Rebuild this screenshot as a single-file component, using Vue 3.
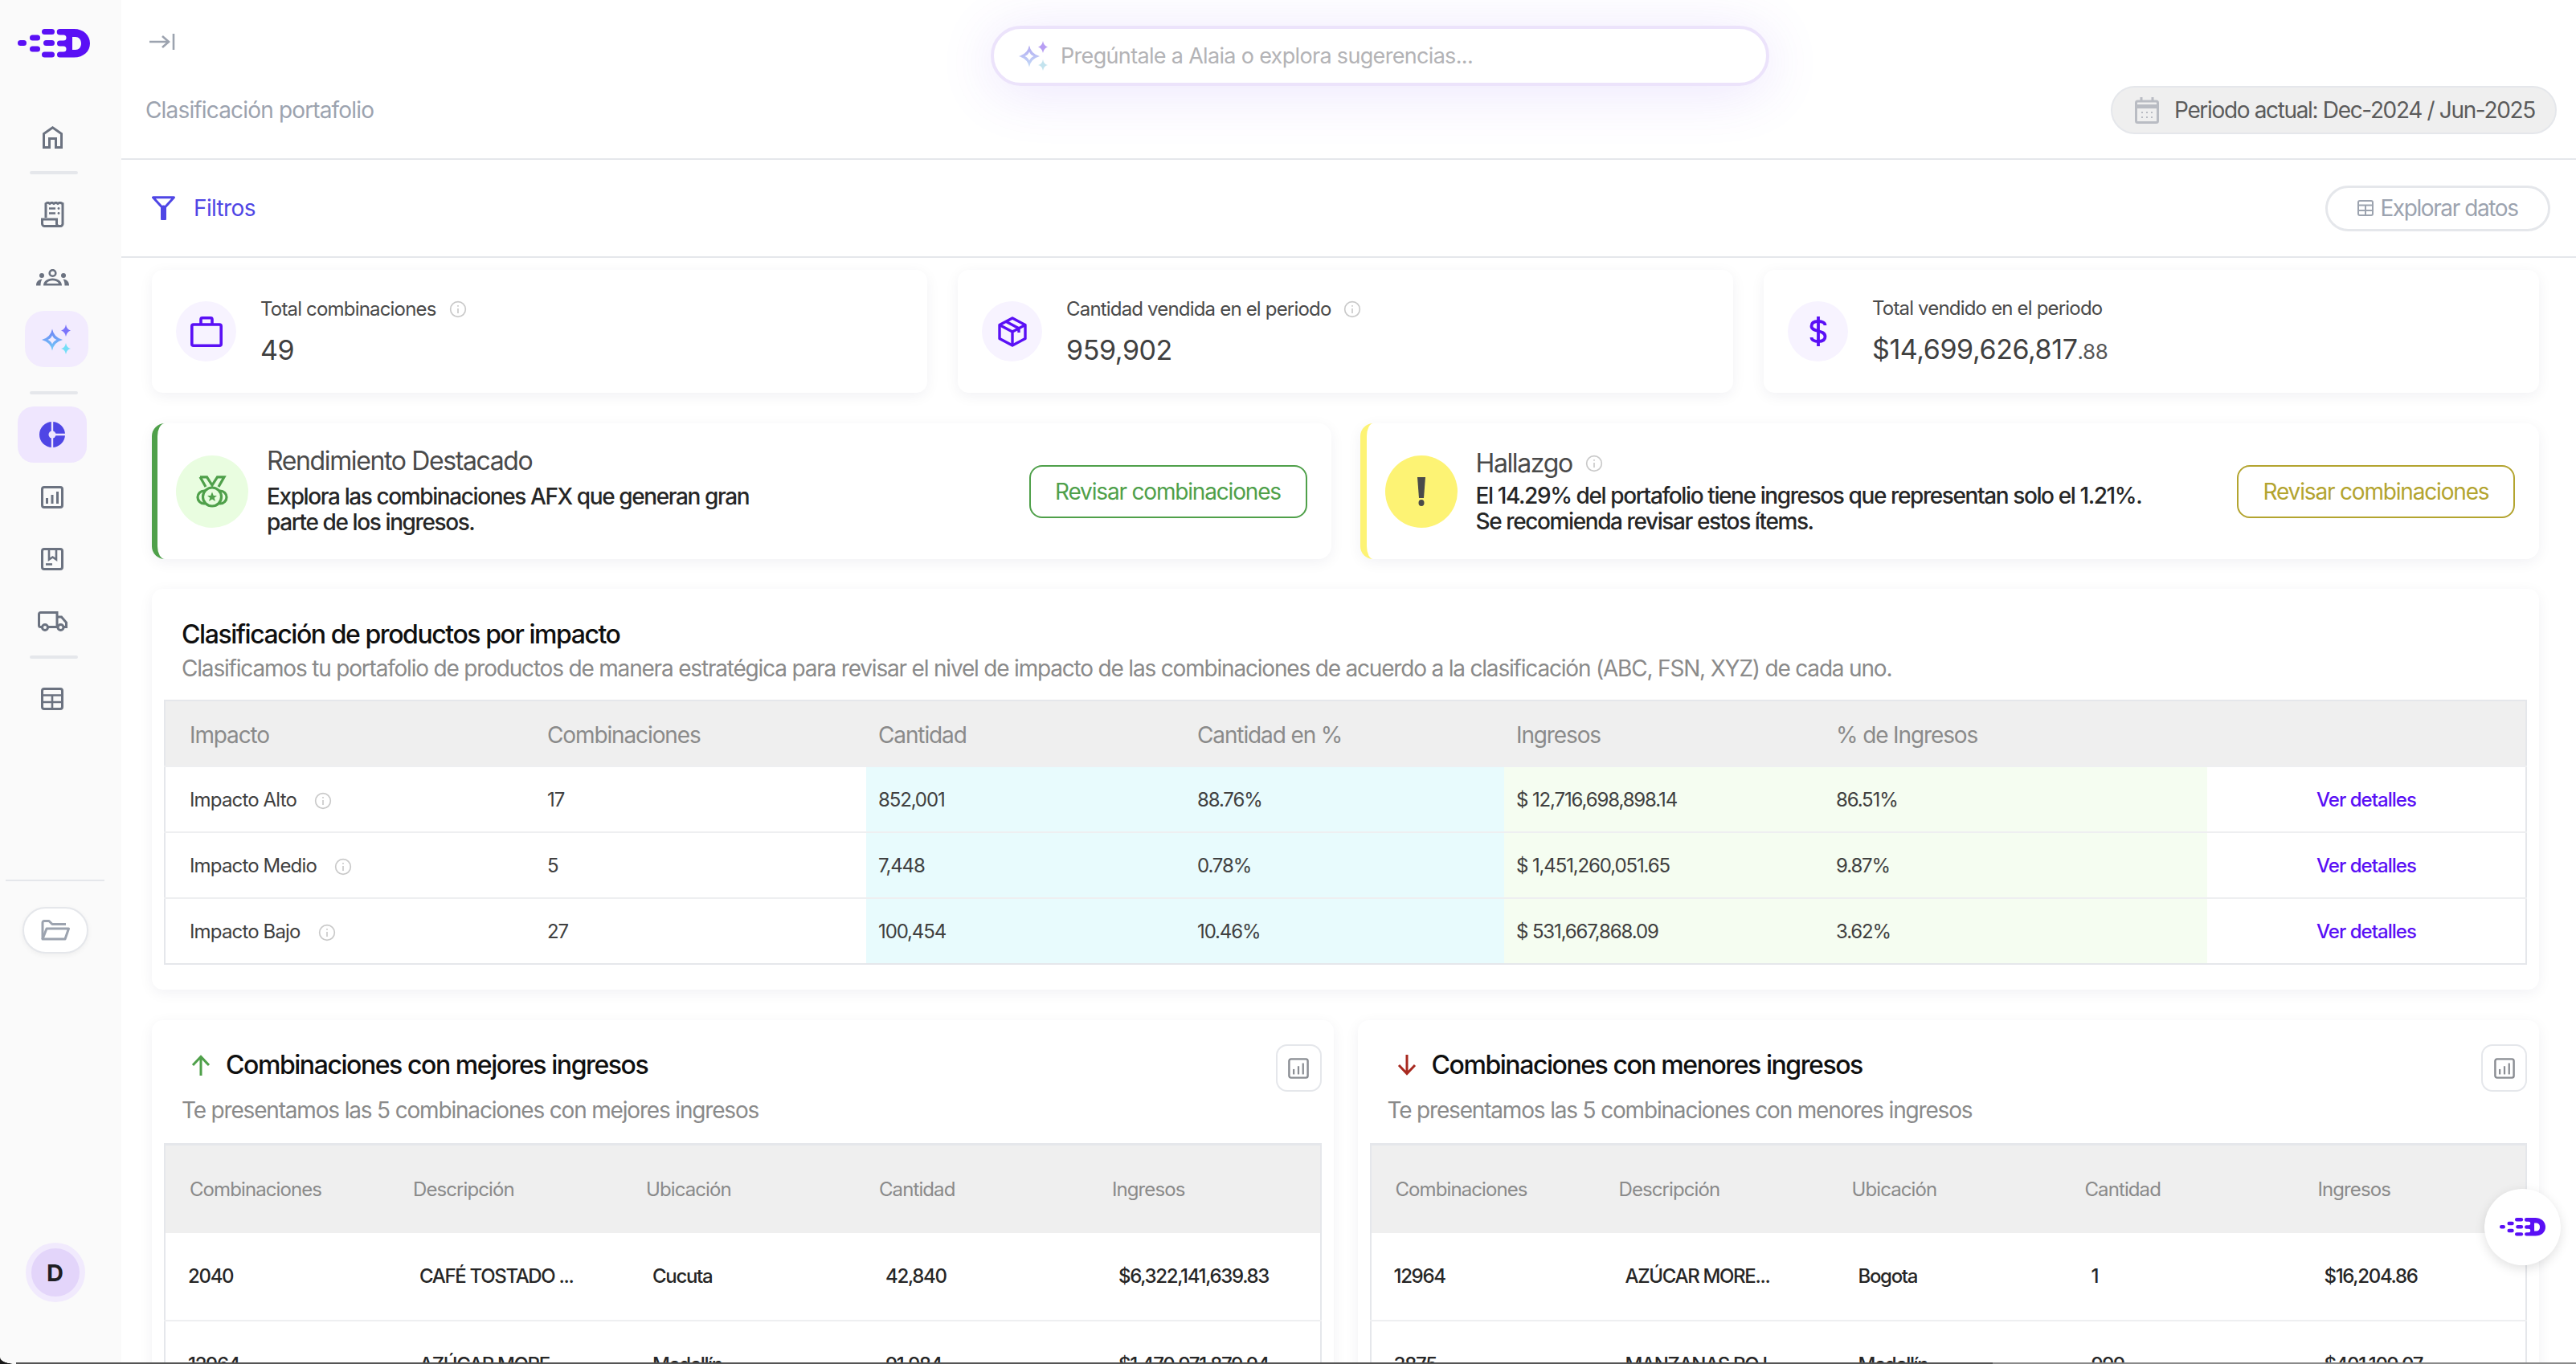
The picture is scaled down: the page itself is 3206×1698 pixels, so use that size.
<template>
  <div class="app">
    <!-- Sidebar -->
    <aside class="sidebar">
      <svg class="logo" viewBox="0 0 90 36">
        <g fill="#5a10f5">
          <rect x="0" y="14" width="11" height="7" rx="3.5" />
          <rect x="15" y="7.5" width="13" height="7" rx="3.5" />
          <rect x="15" y="21.5" width="13" height="7" rx="3.5" />
          <rect x="30" y="0" width="16" height="7" rx="3.5" />
          <rect x="32" y="14" width="14" height="7" rx="3.5" />
          <rect x="30" y="28.5" width="16" height="7" rx="3.5" />
          <path fill-rule="evenodd" d="M52.5 0H70C82 0 90 8 90 18S82 35.5 70 35.5H52.5A3.5 3.5 0 0 1 52.5 28.5H57A3.5 3.5 0 0 0 57 21.5H52.5A3.5 3.5 0 0 1 52.5 14.5H57A3.5 3.5 0 0 0 57 7.5H52.5A3.75 3.75 0 0 1 52.5 0ZM68 10V26H72C76 26 79 23 79 18S76 10 72 10Z" />
        </g>
      </svg>

      <div class="nav-item nav-home">
        <svg width="25" height="28" viewBox="0 0 25 28" fill="none" stroke="#6b7280" stroke-width="3">
          <path d="M1.5 26.5V9.5L12.5 1.8 23.5 9.5V26.5H16.5V15.5H8.5V26.5Z" />
        </svg>
      </div>
      <div class="nav-divider first"></div>
      <div class="nav-item nav-receipt">
        <svg width="29" height="32" viewBox="0 0 29 32" fill="none" stroke="#6b7280" stroke-width="3">
          <path d="M6 20V2.5L8.5 1 11 2.5 13.5 1 16 2.5 18.5 1 21 2.5 23.5 1 27 2.5V27A3 3 0 0 1 24 30.5H4.5A3 3 0 0 1 1.5 27.5V22H19.5V27.5A3 3 0 0 0 22 30.5" />
          <path d="M10 8.5H18M10 14.5H18" stroke-width="2.6" />
          <circle cx="22" cy="8.5" r="1.4" fill="#6b7280" stroke="none" />
          <circle cx="22" cy="14.5" r="1.4" fill="#6b7280" stroke="none" />
        </svg>
      </div>
      <div class="nav-item nav-group">
        <svg width="41" height="21" viewBox="0 0 41 21" fill="#6b7280">
          <circle cx="20.5" cy="5" r="3.8" fill="none" stroke="#6b7280" stroke-width="2.6" />
          <circle cx="7" cy="8" r="3" />
          <circle cx="34" cy="8" r="3" />
          <path d="M0 20.5C0 16 2.5 13 7.5 12.6 6 15 5.5 17.500 5.500 20.500Z" />
          <path d="M41 20.5C41 16 38.5 13 33.5 12.600 35 15 35.500 17.500 35.500 20.500Z" />
          <path fill-rule="evenodd" d="M9 20.500C9 15 14 11.500 20.500 11.500S32 15 32 20.500ZM13 18H28C27 15.500 24 14.300 20.500 14.300S14 15.500 13 18Z" />
        </svg>
      </div>
      <div class="nav-box nav-spark">
        <svg width="36" height="37" viewBox="0 0 36 37">
          <defs>
            <linearGradient id="sparkBig" x1="0" y1="0" x2="0" y2="1">
              <stop offset="0" stop-color="#6d7ff5" />
              <stop offset="1" stop-color="#72cdf8" />
            </linearGradient>
          </defs>
          <path fill="url(#sparkBig)" fill-rule="evenodd" d="M13 5.500Q15 16 26 19 15 22 13 32.500 11 22 0 19 11 16 13 5.500ZM13 13.500Q11.500 17.500 7.500 19 11.500 20.500 13 24.500 14.500 20.500 18.500 19 14.500 17.500 13 13.500Z" />
          <path fill="#7b74fb" d="M30 0Q31 6 36 7.500 31 9 30 15 29 9 24 7.500 29 6 30 0Z" />
          <path fill="#74def7" d="M30 23Q31 29 36 30 31 31 30 37 29 31 24 30 29 29 30 23Z" />
        </svg>
      </div>
      <div class="nav-divider second"></div>
      <div class="nav-box nav-active">
        <svg width="32" height="32" viewBox="0 0 32 32">
          <circle cx="16" cy="16" r="16" fill="#4f46e5" />
          <path d="M16 0V12M32 16H20M16 32V20" stroke="#efe6fe" stroke-width="2.4" />
          <circle cx="16" cy="16" r="4.500" fill="#efe6fe" />
        </svg>
      </div>
      <div class="nav-item nav-chart">
        <svg width="28" height="28" viewBox="0 0 28 28" fill="#6b7280">
          <rect x="1.500" y="1.500" width="25" height="25" rx="2.500" fill="none" stroke="#6b7280" stroke-width="3" />
          <rect x="6" y="15" width="3" height="7" />
          <rect x="12.500" y="11" width="3" height="11" />
          <rect x="19" y="7" width="3" height="15" />
        </svg>
      </div>
      <div class="nav-item nav-package">
        <svg width="28" height="28" viewBox="0 0 28 28" fill="none" stroke="#6b7280" stroke-width="3">
          <rect x="1.500" y="1.500" width="25" height="25" rx="2.500" />
          <path d="M10 2V14.500L14.500 11.500 19 14.500V2" stroke-width="2.600" />
          <path d="M6 20.500H14" stroke-width="2.600" />
        </svg>
      </div>
      <div class="nav-item nav-truck">
        <svg width="37" height="25" viewBox="0 0 37 25" fill="none" stroke="#6b7280" stroke-width="3">
          <path d="M5 19.500H3.500A2 2 0 0 1 1.500 17.500V3.500A2 2 0 0 1 3.500 1.500H24V19.500H13" />
          <path d="M24 7H29.500L35.500 14V19.500H33" />
          <circle cx="9" cy="20" r="3.500" />
          <circle cx="28.500" cy="20" r="3.500" />
        </svg>
      </div>
      <div class="nav-divider third"></div>
      <div class="nav-item nav-table">
        <svg width="28" height="28" viewBox="0 0 28 28" fill="none" stroke="#6b7280" stroke-width="3">
          <rect x="1.500" y="1.500" width="25" height="25" rx="2.500" />
          <path d="M2 9.500H26M2 18H26M14 9.500V26" stroke-width="2.600" />
        </svg>
      </div>

      <div class="sidebar-bottom">
        <div class="side-line"></div>
        <div class="folder-pill">
          <svg width="37" height="26" viewBox="0 0 37 26" fill="none" stroke="#9ca3af" stroke-width="3" stroke-linejoin="round">
            <path d="M3 24V3.500A2 2 0 0 1 5 1.500H11L15 5.500H32" />
            <path d="M3 24L8 11H35.500L31 24Z" />
          </svg>
        </div>
        <div class="avatar"><span>D</span></div>
      </div>
    </aside>

    <main class="main">
      <!-- Header -->
      <header class="top-header">
        <div class="header-left">
          <svg class="collapse-icon" width="32" height="20" viewBox="0 0 32 20" fill="none" stroke="#9ca3af" stroke-width="2.600">
            <path d="M0 10H24M16 3L24 10 16 17" />
            <path d="M30 0V20" />
          </svg>
          <span class="breadcrumb">Clasificación portafolio</span>
        </div>
        <div class="search">
          <svg class="search-spark" width="36" height="37" viewBox="0 0 36 37">
            <defs>
              <linearGradient id="sparkSoft" x1="0" y1="0" x2="0" y2="1">
                <stop offset="0" stop-color="#b3a8f2" />
                <stop offset="1" stop-color="#c4dcf7" />
              </linearGradient>
            </defs>
            <path fill="url(#sparkSoft)" fill-rule="evenodd" d="M13 5.500Q15 16 26 19 15 22 13 32.500 11 22 0 19 11 16 13 5.500ZM13 13.500Q11.500 17.500 7.500 19 11.500 20.500 13 24.500 14.500 20.500 18.500 19 14.500 17.500 13 13.500Z" />
            <path fill="#b79ef3" d="M30 0Q31 6 36 7.500 31 9 30 15 29 9 24 7.500 29 6 30 0Z" />
            <path fill="#c3e3ee" d="M30 23Q31 29 36 30 31 31 30 37 29 31 24 30 29 29 30 23Z" />
          </svg>
          <span class="search-text">Pregúntale a Alaia o explora sugerencias...</span>
        </div>
        <div class="period">
          <svg width="30" height="33" viewBox="0 0 30 33" fill="none" stroke="#b9bcc3" stroke-width="3">
            <rect x="1.500" y="5" width="27" height="26.500" rx="2" />
            <path d="M1.500 11.500H28.500" stroke-width="5" />
            <path d="M8 0V6M22 0V6" />
            <path d="M8 19H10M14 19H16M20 19H22M8 25H10M14 25H16M20 25H22" stroke-width="2.200" />
          </svg>
          <span>Periodo actual: Dec-2024 / Jun-2025</span>
        </div>
      </header>

      <!-- Filters -->
      <div class="filter-bar">
        <div class="filter-link">
          <svg width="29" height="30" viewBox="0 0 29 30" fill="none" stroke="#4f46e5" stroke-width="3" stroke-linejoin="round">
            <path d="M1.500 1.800H27.500L14.500 16Z" />
            <path d="M14.500 15V28" stroke-width="7" stroke-linecap="round" />
          </svg>
          <span>Filtros</span>
        </div>
        <button class="explore-btn">
          <svg width="20" height="20" viewBox="0 0 20 20" fill="none" stroke="#9ca3af" stroke-width="2">
            <rect x="1" y="1" width="18" height="18" rx="2" />
            <path d="M1 6.500H19M1 13H19M10 6.500V19" />
          </svg>
          Explorar datos
        </button>
      </div>

      <div class="content">
        <!-- Stat cards -->
        <section class="stat-grid">
          <div class="stat-card">
            <div class="stat-icon">
              <svg width="40" height="38" viewBox="0 0 40 38" fill="none" stroke="#5a10f5" stroke-width="3.600" stroke-linejoin="round">
                <rect x="1.800" y="10" width="36.400" height="26.200" rx="2" />
                <path d="M13 10V3.500A1.800 1.800 0 0 1 14.800 1.800H25.200A1.800 1.800 0 0 1 27 3.500V10" />
              </svg>
            </div>
            <div>
              <div class="stat-label">Total combinaciones <svg class="info" viewBox="0 0 20 20"><circle cx="10" cy="10" r="8.500" /><path d="M10 9V14.500M10 5.500V7" /></svg></div>
              <div class="stat-value">49</div>
            </div>
          </div>
          <div class="stat-card">
            <div class="stat-icon">
              <svg width="36" height="38" viewBox="0 0 36 38" fill="none" stroke="#5a10f5" stroke-width="3.400" stroke-linejoin="round">
                <path d="M18 2L34 10.500V27.500L18 36 2 27.500V10.500Z" />
                <path d="M2 10.500L18 19 34 10.500M18 19V36M10 6.200L26 14.800V20" />
              </svg>
            </div>
            <div>
              <div class="stat-label">Cantidad vendida en el periodo <svg class="info" viewBox="0 0 20 20"><circle cx="10" cy="10" r="8.500" /><path d="M10 9V14.500M10 5.500V7" /></svg></div>
              <div class="stat-value">959,902</div>
            </div>
          </div>
          <div class="stat-card">
            <div class="stat-icon">
              <svg width="22" height="37" viewBox="0 0 22 37" fill="none" stroke="#5a10f5" stroke-width="3.800">
                <path d="M19.500 11C19.500 8 16 6 11 6S2.500 8 2.500 12C2.500 20 19.500 16 19.500 25C19.500 29 16 31 11 31S2.500 29 2.500 26" />
                <path d="M11 0V37" />
              </svg>
            </div>
            <div>
              <div class="stat-label">Total vendido en el periodo</div>
              <div class="stat-value">$14,699,626,817<small>.88</small></div>
            </div>
          </div>
        </section>

        <!-- Alerts -->
        <section class="alert-grid">
          <div class="alert-card alert-good">
            <div class="alert-circle">
              <svg width="40" height="40" viewBox="0 0 40 40" fill="none" stroke="#4fa04a" stroke-width="3.200">
                <path d="M5 1.800H13.500L20 12 26.500 1.800H35L28 14M5 1.800L12 14" />
                <circle cx="10" cy="27" r="8" />
                <circle cx="30" cy="27" r="8" />
                <circle cx="20" cy="26.500" r="11.500" fill="#e9fde0" />
                <path d="M20 20.500L21.800 25H26L22.700 27.800 24 32 20 29.500 16 32 17.300 27.800 14 25H18.200Z" fill="#4fa04a" stroke="none" />
              </svg>
            </div>
            <div class="alert-text">
              <div class="alert-title">Rendimiento Destacado</div>
              <p class="alert-desc">Explora las combinaciones AFX que generan gran<br />parte de los ingresos.</p>
            </div>
            <button class="alert-btn">Revisar combinaciones</button>
          </div>
          <div class="alert-card alert-warn">
            <div class="alert-circle">
              <svg width="12" height="36" viewBox="0 0 12 36" fill="#4a4a4a">
                <path d="M1 0H11L9 26H3Z" />
                <ellipse cx="6" cy="32" rx="3.500" ry="4" />
              </svg>
            </div>
            <div class="alert-text">
              <div class="alert-title">Hallazgo <svg class="info" viewBox="0 0 20 20"><circle cx="10" cy="10" r="8.500" /><path d="M10 9V14.500M10 5.500V7" /></svg></div>
              <p class="alert-desc">El 14.29% del portafolio tiene ingresos que representan solo el 1.21%.<br />Se recomienda revisar estos ítems.</p>
            </div>
            <button class="alert-btn">Revisar combinaciones</button>
          </div>
        </section>

        <!-- Impact table -->
        <section class="panel impact-panel">
          <h2 class="panel-title">Clasificación de productos por impacto</h2>
          <p class="panel-sub">Clasificamos tu portafolio de productos de manera estratégica para revisar el nivel de impacto de las combinaciones de acuerdo a la clasificación (ABC, FSN, XYZ) de cada uno.</p>
          <table class="impact-table">
            <colgroup>
              <col style="width: 461px" />
              <col style="width: 412px" />
              <col style="width: 397px" />
              <col style="width: 397px" />
              <col style="width: 398px" />
              <col style="width: 477px" />
              <col />
            </colgroup>
            <thead>
              <tr>
                <th>Impacto</th>
                <th>Combinaciones</th>
                <th>Cantidad</th>
                <th>Cantidad en %</th>
                <th>Ingresos</th>
                <th>% de Ingresos</th>
                <th></th>
              </tr>
            </thead>
            <tbody>
              <tr v-for="row in impactRows" :key="row.name">
                <td>
                  <span class="impact-name">{{ row.name }}</span>
                  <svg class="info" viewBox="0 0 20 20"><circle cx="10" cy="10" r="8.500" /><path d="M10 9V14.500M10 5.500V7" /></svg>
                </td>
                <td>{{ row.count }}</td>
                <td class="cell-cyan">{{ row.qty }}</td>
                <td class="cell-cyan">{{ row.qtyPct }}</td>
                <td class="cell-green">{{ row.income }}</td>
                <td class="cell-green">{{ row.incomePct }}</td>
                <td class="cell-link">Ver detalles</td>
              </tr>
            </tbody>
          </table>
        </section>

        <!-- Best / worst combos -->
        <section class="combo-grid">
          <div v-for="panel in comboPanels" :key="panel.title" class="panel combo-panel">
            <div class="combo-head">
              <svg v-if="panel.up" class="combo-arrow" width="26" height="26" viewBox="0 0 26 26" fill="none" stroke="#4fa04a" stroke-width="3">
                <path d="M13 26V3M3 13L13 2.500 23 13" />
              </svg>
              <svg v-else class="combo-arrow" width="26" height="26" viewBox="0 0 26 26" fill="none" stroke="#a82a20" stroke-width="3">
                <path d="M13 0V23M3 13L13 23.500 23 13" />
              </svg>
              <h3 class="combo-title">{{ panel.title }}</h3>
              <div class="chart-btn">
                <svg width="26" height="26" viewBox="0 0 28 28" fill="#8a8d93">
                  <rect x="1.500" y="1.500" width="25" height="25" rx="2.500" fill="none" stroke="#8a8d93" stroke-width="2.600" />
                  <rect x="6.500" y="15" width="2.400" height="7" />
                  <rect x="12.800" y="11" width="2.400" height="11" />
                  <rect x="19" y="7" width="2.400" height="15" />
                </svg>
              </div>
            </div>
            <p class="combo-sub">{{ panel.sub }}</p>
            <table class="combo-table">
              <thead>
                <tr>
                  <th>Combinaciones</th>
                  <th>Descripción</th>
                  <th>Ubicación</th>
                  <th>Cantidad</th>
                  <th>Ingresos</th>
                </tr>
              </thead>
              <tbody>
                <tr v-for="row in panel.rows" :key="row[0]">
                  <td v-for="(cell, i) in row" :key="i">{{ cell }}</td>
                </tr>
              </tbody>
            </table>
          </div>
        </section>
      </div>
    </main>

    <!-- Floating assistant button -->
    <div class="fab">
      <svg width="57" height="23" viewBox="0 0 90 36">
        <g fill="#5a10f5">
          <rect x="0" y="14" width="11" height="7" rx="3.5" />
          <rect x="15" y="7.5" width="13" height="7" rx="3.5" />
          <rect x="15" y="21.5" width="13" height="7" rx="3.5" />
          <rect x="30" y="0" width="16" height="7" rx="3.5" />
          <rect x="32" y="14" width="14" height="7" rx="3.5" />
          <rect x="30" y="28.5" width="16" height="7" rx="3.5" />
          <path fill-rule="evenodd" d="M52.5 0H70C82 0 90 8 90 18S82 35.5 70 35.5H52.5A3.5 3.5 0 0 1 52.5 28.5H57A3.5 3.5 0 0 0 57 21.5H52.5A3.5 3.5 0 0 1 52.5 14.5H57A3.5 3.5 0 0 0 57 7.5H52.5A3.75 3.75 0 0 1 52.5 0ZM68 10V26H72C76 26 79 23 79 18S76 10 72 10Z" />
        </g>
      </svg>
    </div>

    <!-- window edge visible along the bottom of the capture -->
    <div class="window-edge"></div>
    <div class="window-corner"></div>
  </div>
</template>

<script setup>
const impactRows = [
  { name: 'Impacto Alto', count: 17, qty: '852,001', qtyPct: '88.76%', income: '$ 12,716,698,898.14', incomePct: '86.51%' },
  { name: 'Impacto Medio', count: 5, qty: '7,448', qtyPct: '0.78%', income: '$ 1,451,260,051.65', incomePct: '9.87%' },
  { name: 'Impacto Bajo', count: 27, qty: '100,454', qtyPct: '10.46%', income: '$ 531,667,868.09', incomePct: '3.62%' }
]

const comboPanels = [
  {
    title: 'Combinaciones con mejores ingresos',
    sub: 'Te presentamos las 5 combinaciones con mejores ingresos',
    up: true,
    rows: [
      ['2040', 'CAFÉ TOSTADO ...', 'Cucuta', '42,840', '$6,322,141,639.83'],
      ['12964', 'AZÚCAR MORE...', 'Medellín', '91,984', '$1,470,971,879.94']
    ]
  },
  {
    title: 'Combinaciones con menores ingresos',
    sub: 'Te presentamos las 5 combinaciones con menores ingresos',
    up: false,
    rows: [
      ['12964', 'AZÚCAR MORE...', 'Bogota', '1', '$16,204.86'],
      ['3875', 'MANZANAS RO I...', 'Medellín', '999', '$401,109.07']
    ]
  }
]
</script>

<style>
html,
body {
  margin: 0;
  height: 100%;
  overflow: hidden;
  background: #fff;
}
</style>

<style scoped>
.app {
  position: relative;
  display: flex;
  height: 100vh;
  overflow: hidden;
  font-family: Inter, 'Noto Sans', sans-serif;
  letter-spacing: -0.04em;
  color: #404040;
}

/* Sidebar */
.sidebar {
  flex: 0 0 151px;
  display: flex;
  flex-direction: column;
  align-items: center;
  box-sizing: border-box;
  padding: 36px 0 77px;
  background: #fafafa;
}
.logo {
  flex: none;
  width: 90px;
  height: 36px;
  margin-left: -17px;
}
.nav-item {
  display: flex;
  align-items: center;
  justify-content: center;
  height: 60px;
  width: 100%;
  padding-right: 21px;
  box-sizing: border-box;
}
.nav-home { margin-top: 69px; }
.nav-receipt { margin-top: 20px; }
.nav-group { margin-top: 18px; }
.nav-chart { margin-top: 13px; }
.nav-package { margin-top: 17px; }
.nav-truck { margin-top: 17px; }
.nav-table { margin-top: 20px; }
.nav-divider {
  width: 60px;
  height: 4px;
  border-radius: 2px;
  background: #e5e7eb;
  margin-left: -17px;
}
.nav-divider.first { margin-top: 12px; }
.nav-divider.second { margin-top: 30px; }
.nav-divider.third { margin-top: 13px; }
.nav-box {
  display: flex;
  align-items: center;
  justify-content: center;
  height: 70px;
}
.nav-spark {
  width: 79px;
  margin-top: 12px;
  margin-left: -11px;
  border-radius: 24px;
  background: #f2ebfe;
}
.nav-active {
  width: 86px;
  margin-top: 15px;
  margin-left: -21px;
  border-radius: 20px;
  background: #efe6fe;
}
.sidebar-bottom {
  margin-top: auto;
  display: flex;
  flex-direction: column;
  align-items: center;
  width: 100%;
}
.side-line {
  width: 123px;
  height: 2px;
  background: #e5e7eb;
  margin-left: -14px;
}
.folder-pill {
  display: flex;
  align-items: center;
  justify-content: center;
  box-sizing: border-box;
  width: 82px;
  height: 58px;
  margin: 32px 0 0 -14px;
  border: 2px solid #e5e7eb;
  border-radius: 29px;
  background: #fff;
  box-shadow: 0 2px 6px rgba(0, 0, 0, 0.05);
}
.avatar {
  display: flex;
  align-items: center;
  justify-content: center;
  width: 60px;
  height: 60px;
  margin: 360px 0 0 -14px;
  border: 7.5px solid #f1eafd;
  border-radius: 50%;
  background: #e3d5fa;
  font-size: 29px;
  font-weight: 700;
  letter-spacing: 0;
  color: #1f1f23;
}

/* Header */
.main {
  flex: 1;
  min-width: 0;
}
.top-header {
  display: grid;
  grid-template-columns: 1052px 969px 1fr;
  box-sizing: border-box;
  height: 199px;
  padding: 0 24px 0 30px;
  border-bottom: 2px solid #e5e7eb;
}
.header-left {
  display: flex;
  flex-direction: column;
  align-items: flex-start;
  padding: 42px 0 0 5px;
}
.collapse-icon {
  display: block;
}
.breadcrumb {
  margin: 55px 0 0 -5px;
  font-size: 28px;
  line-height: 40px;
  letter-spacing: -0.03em;
  color: #9ca3af;
}
.search {
  display: flex;
  align-items: center;
  gap: 16px;
  box-sizing: border-box;
  align-self: start;
  height: 75px;
  margin-top: 32px;
  padding-left: 31px;
  border: 4px solid #ece3fb;
  border-radius: 38px;
  background: #fff;
  box-shadow: 0 8px 70px rgba(120, 70, 240, 0.14);
}
.search-text {
  font-size: 27px;
  letter-spacing: -0.025em;
  color: #b3b3b6;
}
.period {
  display: flex;
  align-items: center;
  gap: 19px;
  box-sizing: border-box;
  justify-self: end;
  align-self: start;
  width: 555px;
  height: 60px;
  margin-top: 107px;
  padding-left: 28px;
  border: 2px solid #e5e7eb;
  border-radius: 30px;
  background: #efefef;
  font-size: 28px;
  letter-spacing: -0.048em;
  color: #5b5b5b;
  white-space: nowrap;
}
.period svg {
  flex: none;
}

/* Filter bar */
.filter-bar {
  display: flex;
  align-items: center;
  justify-content: space-between;
  box-sizing: border-box;
  height: 122px;
  padding: 0 32px 0 38px;
  border-bottom: 2px solid #e5e7eb;
}
.filter-link {
  display: flex;
  align-items: center;
  gap: 23px;
  font-size: 28px;
  color: #4f46e5;
}
.explore-btn {
  display: flex;
  align-items: center;
  justify-content: center;
  gap: 8px;
  width: 280px;
  height: 57px;
  border: 3px solid #e5e7eb;
  border-radius: 29px;
  background: #fff;
  font-family: inherit;
  letter-spacing: -0.05em;
  font-size: 28px;
  color: #9ca3af;
}

/* Content */
.content {
  padding: 15px 46px 0 38px;
}
.stat-grid {
  display: grid;
  grid-template-columns: repeat(3, 1fr);
  gap: 38px;
}
.stat-card {
  display: flex;
  align-items: center;
  gap: 30px;
  height: 153px;
  padding-left: 30px;
  border-radius: 14px;
  background: #fff;
  box-shadow: 0 4px 18px rgba(20, 20, 60, 0.06);
}
.stat-icon {
  display: flex;
  align-items: center;
  justify-content: center;
  width: 75px;
  height: 75px;
  border-radius: 50%;
  background: #f7f3ff;
}
.stat-label {
  display: flex;
  align-items: center;
  gap: 16px;
  font-size: 24px;
  line-height: 32px;
  letter-spacing: -0.034em;
  color: #4a4a4a;
}
.stat-value {
  margin-top: 15px;
  font-size: 34px;
  line-height: 40px;
  letter-spacing: -0.012em;
  color: #404040;
}
.stat-value small {
  font-size: 26px;
  color: #555;
}
.info {
  flex: none;
  width: 22px;
  height: 22px;
  fill: none;
  stroke: #c9c9c9;
  stroke-width: 1.500;
}

/* Alerts */
.alert-grid {
  display: grid;
  grid-template-columns: 1fr 1fr;
  gap: 36px;
  margin-top: 38px;
}
.alert-card {
  display: flex;
  align-items: center;
  gap: 23px;
  box-sizing: border-box;
  height: 169px;
  padding: 0 30px 0 23px;
  border-radius: 16px;
  background: #fff;
  box-shadow: 0 4px 18px rgba(20, 20, 60, 0.06);
}
.alert-good { border-left: 7px solid #4fa04a; }
.alert-warn { border-left: 8px solid #fdf374; }
.alert-circle {
  display: flex;
  flex: none;
  align-items: center;
  justify-content: center;
  width: 90px;
  height: 90px;
  border-radius: 50%;
}
.alert-good .alert-circle { background: #e9fde0; }
.alert-warn .alert-circle { background: #fdf374; }
.alert-text {
  padding-bottom: 4px;
}
.alert-warn .alert-text {
  padding-bottom: 2px;
}
.alert-title {
  display: flex;
  align-items: center;
  gap: 16px;
  margin-bottom: 8px;
  font-size: 32px;
  line-height: 40px;
  letter-spacing: -0.043em;
  color: #4a4a4a;
}
.alert-warn .alert-title { margin-bottom: 4px; }
.alert-desc {
  margin: 0;
  font-size: 28px;
  line-height: 32px;
  font-weight: 500;
  letter-spacing: -0.05em;
  color: #262626;
}
.alert-btn {
  flex: none;
  margin-left: auto;
  width: 346px;
  height: 66px;
  border: 2px solid currentColor;
  border-radius: 16px;
  background: #fff;
  font-family: inherit;
  letter-spacing: -0.042em;
  font-size: 28px;
}
.alert-good .alert-btn { color: #4fa04a; }
.alert-warn .alert-btn { color: #b3a42f; }

/* Panels */
.panel {
  box-sizing: border-box;
  padding: 0 15px;
  border-radius: 14px;
  background: #fff;
  box-shadow: 0 4px 18px rgba(20, 20, 60, 0.06);
}
.impact-panel {
  margin-top: 37px;
  padding-top: 37px;
  padding-bottom: 31px;
}
.panel-title {
  margin: 0 0 4px 22px;
  font-size: 32px;
  line-height: 40px;
  font-weight: 500;
  letter-spacing: -0.045em;
  color: #0f0f0f;
}
.panel-sub {
  margin: 0 0 21px 22px;
  font-size: 28px;
  line-height: 36px;
  letter-spacing: -0.0425em;
  color: #8a8a8a;
  white-space: nowrap;
}
.impact-table {
  width: 100%;
  table-layout: fixed;
  border-collapse: collapse;
  border: 2px solid #e5e7eb;
}
.impact-table th {
  height: 82px;
  padding: 4px 0 0 15px;
  background: #efefef;
  font-size: 28px;
  font-weight: 400;
  text-align: left;
  color: #8a8a8a;
  letter-spacing: -0.04em;
  box-sizing: border-box;
}
.impact-table td {
  height: 80px;
  padding: 0 0 0 15px;
  border-top: 2px solid #eeeff1;
  font-size: 24px;
  letter-spacing: -0.047em;
  color: #404040;
  white-space: nowrap;
}
.impact-table tr > :first-child {
  padding-left: 30px;
}
.impact-name {
  margin-right: 22px;
  letter-spacing: -0.035em;
}
.impact-table .info {
  vertical-align: -4px;
}
.cell-cyan { background: #e8fbfd; }
.cell-green { background: #f5fdf1; }
.impact-table .cell-link {
  padding: 0;
  text-align: center;
  font-weight: 500;
  letter-spacing: -0.04em;
  color: #5a10f5;
}

/* Combination panels */
.combo-grid {
  display: grid;
  grid-template-columns: 1fr 1fr;
  gap: 30px;
  margin-top: 38px;
}
.combo-panel {
  padding-top: 30px;
  height: 700px;
}
.combo-head {
  display: flex;
  align-items: center;
  gap: 18px;
  padding-left: 33px;
}
.combo-arrow {
  flex: none;
  margin-bottom: 8px;
}
.combo-title {
  margin: 0 0 8px;
  font-size: 32px;
  line-height: 40px;
  font-weight: 500;
  letter-spacing: -0.045em;
  color: #0f0f0f;
}
.chart-btn {
  display: flex;
  align-items: center;
  justify-content: center;
  box-sizing: border-box;
  width: 57px;
  height: 59px;
  margin-left: auto;
  border: 2px solid #e5e7eb;
  border-radius: 14px;
  background: #fff;
}
.combo-sub {
  margin: 5px 0 23px 22px;
  font-size: 28px;
  line-height: 36px;
  letter-spacing: -0.042em;
  color: #8a8a8a;
}
.combo-table {
  width: 100%;
  table-layout: fixed;
  border-collapse: collapse;
  border: 2px solid #e5e7eb;
  border-top: 3px solid #e5e7eb;
}
.combo-table th {
  box-sizing: border-box;
  height: 110px;
  padding: 0 0 0 30px;
  background: #efefef;
  font-size: 24px;
  font-weight: 400;
  text-align: left;
  letter-spacing: -0.038em;
  color: #8a8a8a;
}
.combo-table th:first-child {
  width: 279px;
}
.combo-table th:nth-child(2),
.combo-table th:nth-child(3),
.combo-table th:nth-child(4) {
  width: 290px;
}
.combo-table td {
  height: 108px;
  padding: 0 0 0 38px;
  border-bottom: 2px solid #eeeff1;
  font-size: 24px;
  font-weight: 500;
  letter-spacing: -0.055em;
  color: #262626;
  white-space: nowrap;
}
.combo-table td:first-child {
  padding-left: 28px;
}

/* Overlays */
.fab {
  position: absolute;
  left: 3092px;
  top: 1480px;
  display: flex;
  align-items: center;
  justify-content: center;
  width: 95px;
  height: 95px;
  border-radius: 50%;
  background: #fff;
  box-shadow: 0 4px 14px rgba(0, 0, 0, 0.12);
}
.window-edge {
  position: absolute;
  left: 20px;
  right: 0;
  bottom: 0;
  height: 2px;
  background: linear-gradient(to right, #555 0, #555 2460px, #8a8a8a 2460px, #8a8a8a 100%);
}
.window-corner {
  position: absolute;
  left: 0;
  bottom: 0;
  width: 20px;
  height: 8px;
  background: radial-gradient(ellipse at top right, transparent 68%, #1a1a1a 72%);
}
</style>
